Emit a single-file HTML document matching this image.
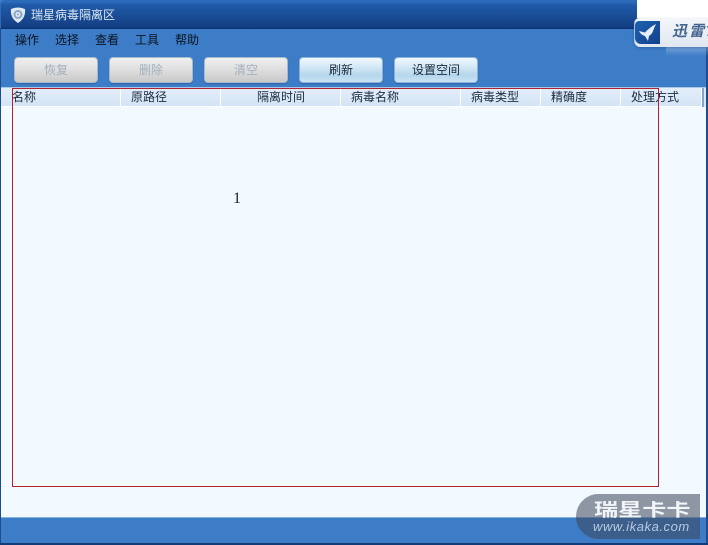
<!DOCTYPE html>
<html><head><meta charset="utf-8">
<style>
html,body{margin:0;padding:0}
body{width:708px;height:545px;position:relative;overflow:hidden;background:#3d7cc6;font-family:"Liberation Sans","WenQuanYi Zen Hei","Noto Sans CJK SC",sans-serif;font-size:12px;color:#111}
.a{position:absolute;white-space:nowrap}
.title{left:0;top:0;width:708px;height:29px;box-sizing:border-box;border:1px solid #2b6cb8;border-bottom:1px solid #0b2f70;border-radius:5px 5px 0 0;background:linear-gradient(#2f6fc0 0,#1f5aa8 4px,#1b4f98 50%,#133c80 100%)}
.m{top:33px;font-size:12px;line-height:14px;color:#0c1420}
.b{top:57px;width:84px;height:26px;box-sizing:border-box;border-radius:4px;text-align:center;line-height:25px;font-size:12px;box-shadow:0 1px 1px rgba(20,60,120,.35)}
.d{background:linear-gradient(#efefef,#e2e2e2 40%,#c9c9c9 100%);border:1px solid #a9bacb;color:#a3b0bd}
.e{background:linear-gradient(#f0f8fd,#d6e9f6 35%,#b4d6ec 72%,#cbe4f4 100%);border:1px solid #8db4d8;color:#1a2a3a}
.h{top:88px;height:19px;box-sizing:border-box;background:linear-gradient(#e4eefa,#d3e4f6);border-right:1px solid #fff;border-bottom:1px solid #fff;line-height:19px;font-size:12px;color:#1c2c40}
</style></head><body>
<div class="a title"></div>
<svg class="a" style="left:10px;top:7px" width="16" height="17" viewBox="0 0 16 17">
<path d="M1 2 Q8 -1 15 2 Q16 11 8 16 Q0 11 1 2Z" fill="#dfe9f2"/>
<circle cx="8" cy="7.5" r="4.5" fill="#8aa6c8"/><circle cx="8" cy="7.5" r="2.5" fill="#e3ecf5"/><circle cx="8" cy="7.5" r="1" fill="#8aa6c8"/>
</svg>
<div class="a" style="left:31px;top:8px;font-size:12px;line-height:14px;color:#dbe6f3">瑞星病毒隔离区</div>

<div class="a m" style="left:15px">操作</div>
<div class="a m" style="left:55px">选择</div>
<div class="a m" style="left:95px">查看</div>
<div class="a m" style="left:135px">工具</div>
<div class="a m" style="left:175px">帮助</div>

<div class="a b d" style="left:14px">恢复</div>
<div class="a b d" style="left:109px">删除</div>
<div class="a b d" style="left:204px">清空</div>
<div class="a b e" style="left:299px">刷新</div>
<div class="a b e" style="left:394px">设置空间</div>

<div class="a" style="left:1px;top:87px;width:705px;height:430px;background:#f2f9ff"></div>
<div class="a" style="left:1px;top:87px;width:705px;height:1px;background:#a9c7e8"></div>
<div class="a h" style="left:1px;width:120px;padding-left:11px">名称</div>
<div class="a h" style="left:121px;width:100px;padding-left:10px">原路径</div>
<div class="a h" style="left:221px;width:120px;padding-left:36px">隔离时间</div>
<div class="a h" style="left:341px;width:120px;padding-left:10px">病毒名称</div>
<div class="a h" style="left:461px;width:80px;padding-left:10px">病毒类型</div>
<div class="a h" style="left:541px;width:80px;padding-left:10px">精确度</div>
<div class="a h" style="left:621px;width:81px;padding-left:10px">处理方式</div>
<div class="a" style="left:702px;top:88px;width:2px;height:19px;background:#7fa6cc"></div>
<div class="a" style="left:704px;top:88px;width:2px;height:19px;background:#dbe8f6"></div>

<div class="a" style="left:12px;top:88px;width:647px;height:399px;box-sizing:border-box;border:1px solid #b3202e"></div>
<div class="a" style="left:233px;top:190px;font-family:'Liberation Serif',serif;font-size:16px;line-height:18px;color:#222">1</div>

<div class="a" style="left:0;top:517px;width:708px;height:1px;background:#86b2de"></div>
<div class="a" style="left:0;top:29px;width:1px;height:516px;background:#1c4c8c"></div>
<div class="a" style="left:706px;top:29px;width:2px;height:516px;background:#1c4c8c"></div>
<div class="a" style="left:0;top:543px;width:708px;height:2px;background:#123c78"></div>

<div class="a" style="left:576px;top:494px;width:124px;height:45px;border-radius:24px 0 0 24px;background:rgba(60,70,90,.55)"></div>
<div class="a" style="left:594px;top:501px;font-size:18px;font-weight:bold;line-height:18px;color:#f2f5f8;height:18px;overflow:hidden;transform-origin:0 0;transform:scaleX(1.34)">瑞星卡卡</div>
<div class="a" style="left:593px;top:519px;font-size:13px;font-style:italic;line-height:15px;letter-spacing:.55px;color:#b7cbe2">www.ikaka.com</div>

<div class="a" style="left:637px;top:0;width:71px;height:18px;background:#fff"></div>
<div class="a" style="left:666px;top:47px;width:42px;height:9px;background:linear-gradient(rgba(200,220,245,.4),rgba(61,124,198,0))"></div>
<div class="a" style="left:634px;top:18px;width:74px;height:29px;box-sizing:border-box;border-radius:5px 0 0 6px;background:linear-gradient(#f4f6f9,#dfe7f1);border-left:1px solid #a8c0dc;box-shadow:0 1px 2px rgba(30,60,110,.4)"></div>
<div class="a" style="left:635px;top:21px;width:25px;height:23px;border-radius:4px 0 0 6px;background:linear-gradient(135deg,#1e62b0,#123f8c)"></div>
<svg class="a" style="left:638px;top:23px" width="20" height="19" viewBox="0 0 20 19"><path d="M1 8 L7 9.5 Q12 4 18 1 Q16 5 15 8 Q14 11 11 13 L10 18 L7 13 Q3 12 1 8Z" fill="#e6eff6"/></svg>
<div class="a" style="left:672px;top:23px;width:36px;overflow:hidden;font-size:15px;line-height:18px;font-weight:bold;font-style:italic;letter-spacing:2px;color:#44658d">迅雷7</div>
</body></html>
